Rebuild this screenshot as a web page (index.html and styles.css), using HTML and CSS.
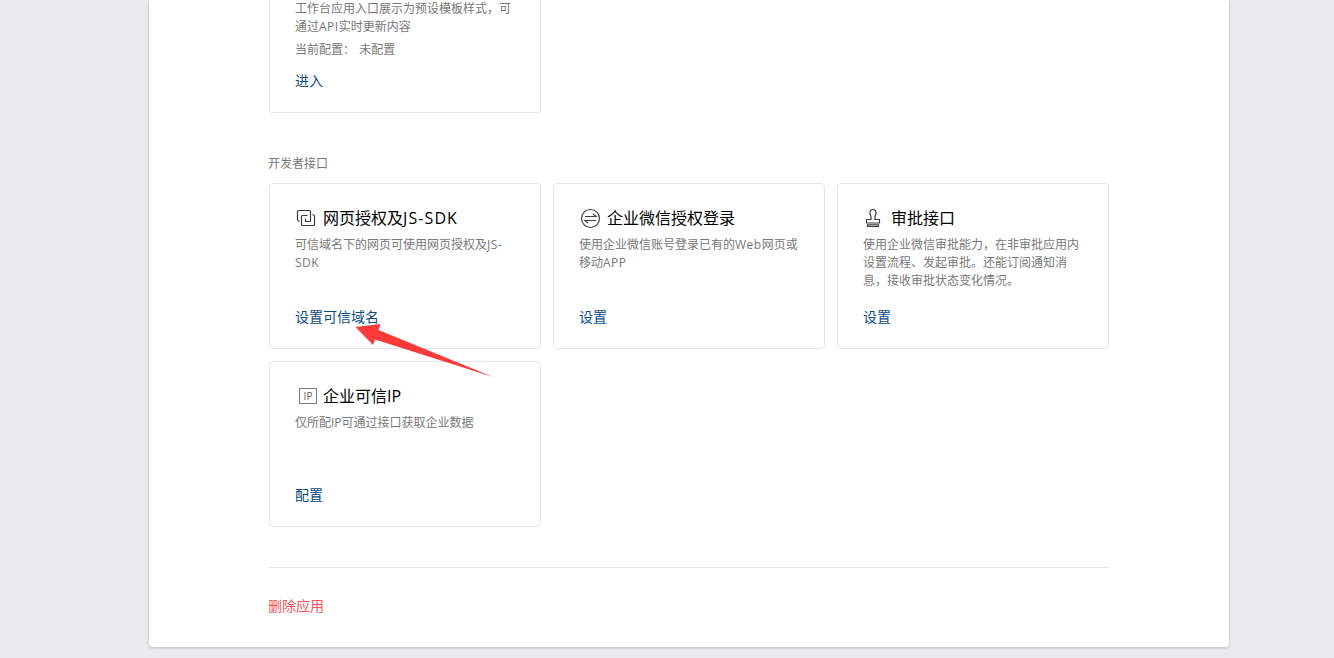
FILE: index.html
```html
<!DOCTYPE html>
<html lang="zh-CN">
<head>
<meta charset="UTF-8" />
<meta name="viewport" content="width=device-width, initial-scale=1" />
<title>应用管理</title>
<link rel="stylesheet" href="styles.css">
</head>
<body>
  <div id="container">
    <div class="cards">
      <div class="card card-top">
        <p class="desc">工作台应用入口展示为预设模板样式，可通过<span class="en">API</span>实时更新内容</p>
        <p class="desc status">当前配置： <span>未配置</span></p>
        <a class="link" href="#">进入</a>
      </div>
    </div>

    <h2>开发者接口</h2>
    <div class="cards">
      <div class="card">
        <h3>
          <svg class="icon" width="28" height="24" viewBox="0 0 28 24" aria-hidden="true">
            <path d="M4.500 15.500l-1-.5a1.500 1.500 0 0 1-1-1.500v-8a1 1 0 0 1 1-1h11a1 1 0 0 1 1 1v9a1 1 0 0 1-1 1h-4v-3" />
            <path d="M17.500 8.500l1 .5a1.500 1.500 0 0 1 1 1.500v8a1 1 0 0 1-1 1h-11a1 1 0 0 1-1-1v-8a1 1 0 0 1 1-1h5" />
          </svg>网页授权及<span class="en">JS-SDK</span>
        </h3>
        <p class="desc">可信域名下的网页可使用网页授权及<span class="en">JS-SDK</span></p>
        <a class="link" href="#">设置可信域名</a>
        <!-- Pointer to the trusted domain link -->
        <svg class="arrow" width="138" height="54" viewBox="0 0 138 54" aria-hidden="true">
          <path d="M0.5 3 L25.5 0 L23.5 6 L138 53 L20 15.500 L18 21 Z" />
        </svg>
      </div>

      <div class="card">
        <h3>
          <svg class="icon" width="28" height="24" viewBox="0 0 28 24" aria-hidden="true">
            <circle cx="11.5" cy="12.5" r="9" />
            <path d="M6 10.5h11l-3-2.500M17 14.5H6l3 2.500" />
          </svg>企业微信授权登录
        </h3>
        <p class="desc">使用企业微信账号登录已有的<span class="en">Web</span>网页或移动<span class="en">APP</span></p>
        <a class="link" href="#">设置</a>
      </div>

      <div class="card">
        <h3>
          <svg class="icon" width="28" height="24" viewBox="0 0 28 24" aria-hidden="true">
            <path d="M3.500 17v-3.500h4.500v-3l-1-3c-.5-2.500 1-4 3-4s3.500 1.500 3 4l-1 3v3h4.500v3.500z" />
            <path d="M4.500 18.800h11v1.700h-11z" />
          </svg>审批接口
        </h3>
        <p class="desc">使用企业微信审批能力，在非审批应用内设置流程、发起审批。还能订阅通知消息，接收审批状态变化情况。</p>
        <a class="link" href="#">设置</a>
      </div>

      <div class="card">
        <h3><span class="icon-ip">IP</span>企业可信IP</h3>
        <p class="desc">仅所配IP可通过接口获取企业数据</p>
        <a class="link" href="#">配置</a>
      </div>
    </div>

    <div class="footer">
      <a class="delete" href="#">删除应用</a>
    </div>
  </div>
</body>
</html>
```
FILE: styles.css
```css
/* Reset */
* {
  box-sizing: border-box;
}
body {
  margin: 0;
  height: 658px;
  overflow: hidden;
  background: #e8eaec;
  font-family: "Open Sans", "Noto Sans CJK SC", sans-serif;
  color: #000;
}
h2, h3, p {
  margin: 0;
  font-weight: 400;
}
a {
  text-decoration: none;
}
#container {
  width: 1080px;
  height: 647px;
  margin-left: 149px;
  padding: 0 120px;
  background: #fff;
  border-radius: 0 0 4px 4px;
  box-shadow: 0 1px 3px rgba(0, 0, 0, 0.2);
}
h2 {
  margin: 42px 0 10px -1px;
  font-size: 12px;
  line-height: 18px;
  color: #787878;
}

/* Cards */
.cards {
  display: grid;
  grid-template-columns: repeat(3, 272px);
  gap: 12px;
}
.card {
  position: relative;
  display: flex;
  flex-direction: column;
  height: 166px;
  padding: 22px 25px 21px;
  border: 1px solid #e4e6e9;
  border-radius: 4px;
}
.card-top {
  height: 113px;
  padding-top: 0;
  border-top: none;
  border-radius: 0 0 4px 4px;
}
h3 {
  display: flex;
  margin-bottom: 6px;
  font-size: 16px;
  line-height: 24px;
}
.desc {
  font-size: 12px;
  line-height: 18px;
  color: #787878;
}
.en {
  letter-spacing: 0.5px;
}
h3 .en {
  letter-spacing: 1.1px;
}
.status {
  margin-top: 5px;
}
.status span {
  margin-left: 1px;
}
.link {
  margin-top: auto;
  font-size: 14px;
  line-height: 20px;
  color: #0d4a82;
}

/* Icons */
.icon {
  flex: none;
  fill: none;
  stroke: #3c3e42;
  stroke-width: 1.2;
}
.icon-ip {
  width: 18px;
  height: 16px;
  margin: 4px 6px 0 4px;
  border: 1px solid #787a80;
  font-size: 10px;
  line-height: 14px;
  text-align: center;
  color: #63656b;
}
.arrow {
  position: absolute;
  left: 85px;
  top: 140px;
  z-index: 1;
  fill: #fc3a3a;
}

.footer {
  margin-top: 40px;
  padding-top: 28px;
  border-top: 1px solid #e4e6e9;
}
.delete {
  display: block;
  margin-left: -1px;
  font-size: 14px;
  line-height: 20px;
  color: #f2555a;
}
```
